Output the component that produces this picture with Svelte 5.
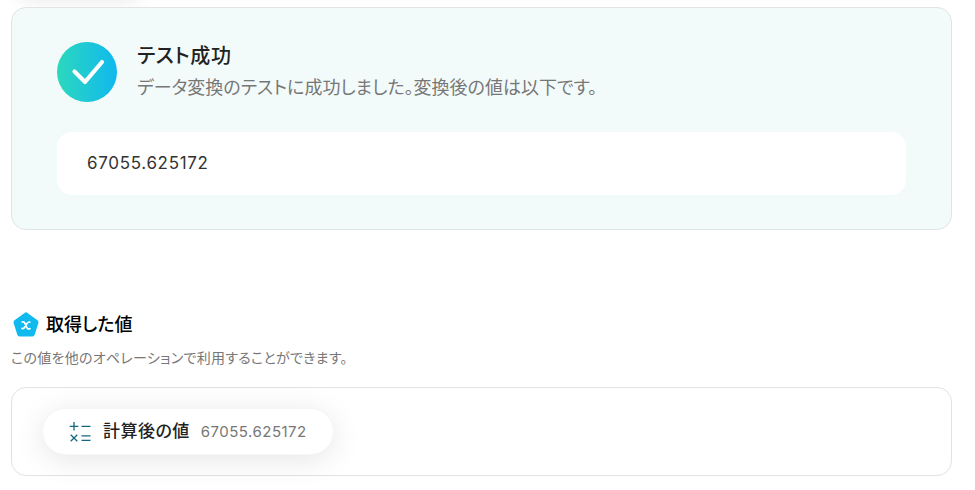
<script lang="ts">
  const result = '67055.625172';
  const output = { label: '計算後の値', value: result };
</script>

<main class="page">
  <div class="toolbar-shadow"></div>

  <section class="success">
    <div class="success-head">
      <svg class="success-icon" viewBox="0 0 60 60" aria-hidden="true">
        <defs>
          <linearGradient id="check-bg" x1="0" y1="0" x2="1" y2="0">
            <stop offset="0" stop-color="#2dd8bd" />
            <stop offset="1" stop-color="#10b8ee" />
          </linearGradient>
        </defs>
        <circle cx="30" cy="30" r="30" fill="url(#check-bg)" />
        <path d="M17.5 29.5 L28 40 L45 20" fill="none" stroke="#fff" stroke-width="4.2" stroke-linecap="round" stroke-linejoin="round" />
      </svg>
      <div>
        <h2 class="success-title">テスト成功</h2>
        <p class="success-text">データ変換のテストに成功しました。変換後の値は以下です。</p>
      </div>
    </div>
    <div class="result">{result}</div>
  </section>

  <section class="outputs">
    <h3 class="outputs-title">
      <svg class="outputs-icon" viewBox="0 0 30 30" aria-hidden="true">
        <path d="M15 4.9 L25 12.2 L21.3 23.9 H8.7 L5 12.2 Z" fill="#10b9ee" stroke="#10b9ee" stroke-width="5" stroke-linejoin="round" />
        <path d="M11.2 12 C13 11.3 13.6 12.4 14.1 13.7 L15.7 17.3 C16.3 18.8 17.2 19.3 18.9 18.6 M18.9 12.2 C17.6 11.5 16.8 12.5 16 13.6 L14 16.8 C13.1 18.3 12.4 19.1 11 18.4" fill="none" stroke="#fff" stroke-width="1.7" stroke-linecap="round" />
      </svg>
      <span>取得した値</span>
    </h3>
    <p class="outputs-text">この値を他のオペレーションで利用することができます。</p>
    <div class="outputs-box">
      <div class="chip">
        <svg class="chip-icon" viewBox="0 0 22 22" aria-hidden="true">
          <path d="M5 1 V9.5 M0.7 5.3 H9.3 M12.5 5.3 H21.5 M1.7 13.7 L8.3 20.3 M8.3 13.7 L1.7 20.3 M12.5 14.8 H21.5 M12.5 19.4 H21.5" fill="none" stroke="#13697f" stroke-width="1.3" />
        </svg>
        <span class="chip-label">{output.label}</span>
        <span class="chip-value">{output.value}</span>
      </div>
    </div>
  </section>
</main>

<style>
  :global(body) {
    margin: 0;
    background: #fff;
  }

  .page {
    padding: 7px 23px 14px 11px;
    font-family: Inter, "Noto Sans CJK JP", sans-serif;
    font-feature-settings: "palt";
    color: #222;
  }

  h2,
  h3,
  p {
    margin: 0;
  }

  /* нижний край тени панели, которая уходит за верх страницы */
  .toolbar-shadow {
    position: absolute;
    top: -24px;
    left: 20px;
    width: 120px;
    height: 16px;
    border-radius: 8px;
    box-shadow: 0 4px 20px rgba(0, 0, 0, 0.15);
  }

  .success {
    position: relative;
    padding: 34px 45px;
    border: 1px solid #e0e4e4;
    border-radius: 15px;
    background: #f2fbfa;
  }

  .success-head {
    display: flex;
    align-items: center;
    gap: 20px;
    margin-bottom: 30px;
  }

  .success-icon {
    flex: none;
    width: 60px;
    height: 60px;
  }

  .success-title {
    margin-bottom: 4px;
    font-size: 20px;
    line-height: 28px;
    font-weight: 500;
    letter-spacing: 0.03em;
  }

  .success-text {
    font-size: 18px;
    line-height: 28px;
    color: #777;
  }

  .result {
    padding: 16px 30px;
    border-radius: 15px;
    background: #fff;
    font-size: 17px;
    line-height: 31px;
    letter-spacing: 0.04em;
    color: #333;
  }

  .outputs {
    margin-top: 80px;
  }

  .outputs-title {
    display: flex;
    align-items: center;
    gap: 5px;
    font-size: 18px;
    line-height: 30px;
    font-weight: 500;
    color: #000;
  }

  .outputs-icon {
    width: 30px;
    height: 30px;
  }

  .outputs-text {
    margin: 6px 0 17px;
    font-size: 14px;
    line-height: 24px;
    letter-spacing: 0.02em;
    color: #777;
  }

  .outputs-box {
    display: flex;
    padding: 20px 30px;
    border: 1px solid #e2e2e2;
    border-radius: 15px;
  }

  .chip {
    display: flex;
    align-items: center;
    padding: 8px 26px;
    border: 1px solid #f6f6f6;
    border-radius: 24px;
    background: #fff;
    box-shadow: 0 5px 30px rgba(0, 0, 0, 0.1);
    line-height: 29px;
    letter-spacing: 0.03em;
  }

  .chip-icon {
    width: 22px;
    height: 22px;
    margin-right: 12px;
  }

  .chip-label {
    margin-right: 11px;
    font-size: 17px;
    font-weight: 500;
  }

  .chip-value {
    font-size: 15px;
    color: #777;
  }
</style>
